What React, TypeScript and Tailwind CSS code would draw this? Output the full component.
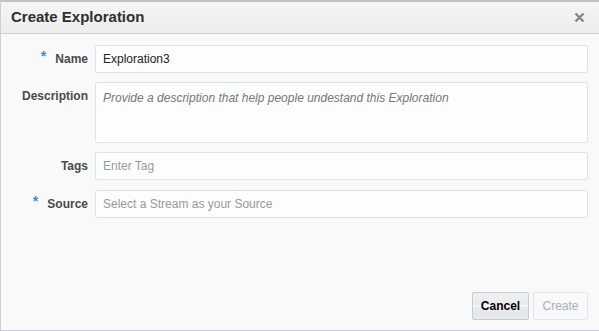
import React from "react";

const inputCls =
  "h-[28px] w-full rounded-[2px] border border-[#dfe3e8] bg-[#fcfdfe] px-[7px] text-[12px] text-[#222] outline-none placeholder:text-[#9a9a9a]";

function Label({ text, required }: { text: string; required?: boolean }) {
  return (
    <div className="flex w-[94px] shrink-0 justify-end pr-[7px] text-[12px] font-bold text-[#4a4a4a]">
      {required && <span className="mr-[9px] text-[14px] leading-[12px] text-[#3b8fd6]">*</span>}
      <span>{text}</span>
    </div>
  );
}

export default function App() {
  return (
    <div
      className="flex h-[331px] w-[599px] flex-col border-t-2 border-l border-b border-t-[#c2c2c2] border-l-[#c6d1db] border-b-[#c6d1db] bg-[#f9f9f9]"
      style={{ fontFamily: '"Liberation Sans", Arial, sans-serif' }}
    >
      <div className="flex h-[32px] shrink-0 items-center justify-between border-b border-[#c8d0d8] bg-gradient-to-b from-[#f5f5f5] to-[#ededed] pl-[10px] pr-[14px]">
        <span className="text-[15px] font-bold text-[#2e2e2e]">Create Exploration</span>
        <svg width="11" height="11" viewBox="0 0 11 11">
          <path d="M1.5 1.5 L9.5 9.5 M9.5 1.5 L1.5 9.5" stroke="#7f8a94" strokeWidth="2.4" />
        </svg>
      </div>
      <div className="flex flex-1 flex-col gap-[9px] pl-0 pr-[11px] pt-[11px]">
        <div className="flex items-center">
          <Label text="Name" required />
          <input className={inputCls} defaultValue="Exploration3" />
        </div>
        <div className="flex items-start">
          <div className="pt-[5px]">
            <Label text="Description" />
          </div>
          <textarea
            className="h-[61px] w-full resize-none rounded-[2px] border border-[#dfe3e8] bg-[#fcfdfe] px-[7px] py-[6px] text-[12px] italic text-[#222] outline-none placeholder:text-[#777]"
            placeholder="Provide a description that help people undestand this Exploration"
          />
        </div>
        <div className="flex items-center">
          <Label text="Tags" />
          <input className={inputCls} placeholder="Enter Tag" />
        </div>
        <div className="mt-[1px] flex items-center">
          <Label text="Source" required />
          <input className={inputCls} placeholder="Select a Stream as your Source" />
        </div>
        <div className="flex-1" />
        <div className="mb-[10px] flex justify-end gap-[4px]">
          <button className="h-[28px] w-[57px] rounded-[2px] border border-[#c4ccd4] bg-[linear-gradient(to_bottom,#eef0f2_0%,#e9ebed_45%,#ffffff_50%,#e6e9ec_55%,#e6e9ec_100%)] text-[12px] font-bold text-black">
            Cancel
          </button>
          <button className="h-[28px] w-[55px] rounded-[2px] border border-[#e3e6e9] bg-[#f8f9fa] text-[12px] text-[#a9b0b6]">
            Create
          </button>
        </div>
      </div>
    </div>
  );
}
